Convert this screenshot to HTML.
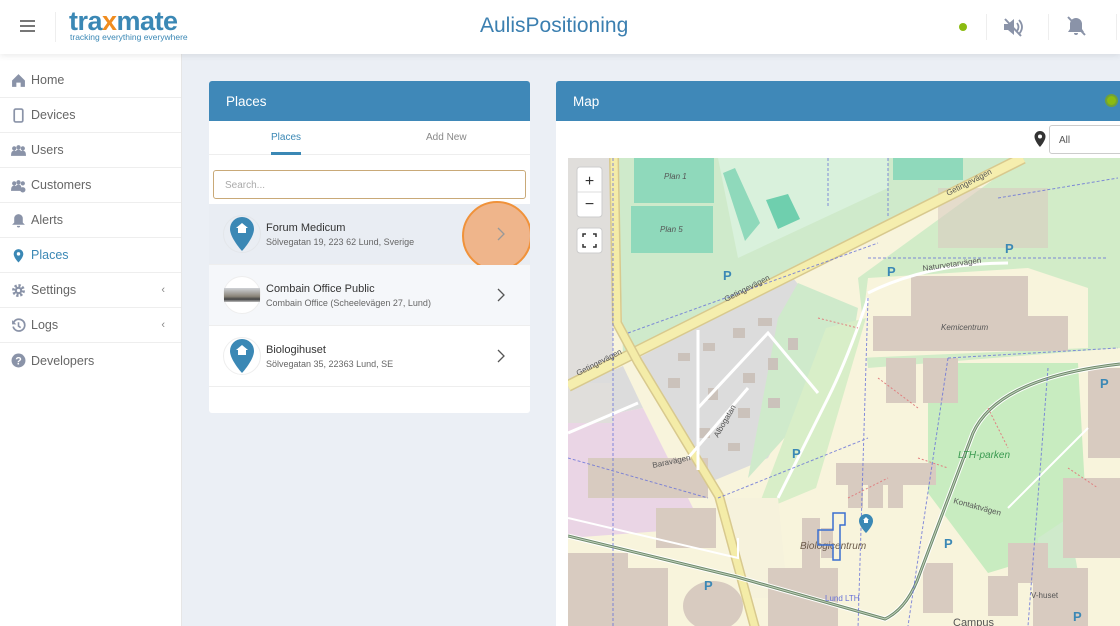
<!DOCTYPE html>
<html><head><meta charset="utf-8"><style>
*{box-sizing:border-box;margin:0;padding:0}
html,body{width:1120px;height:626px;overflow:hidden}
body{font-family:"Liberation Sans",sans-serif;background:#ebeff5;position:relative;color:#555}
.hdr{position:absolute;left:0;top:0;width:1120px;height:54px;background:#fff;box-shadow:0 2px 6px rgba(0,0,0,.08);z-index:3}
.side{position:absolute;left:0;top:54px;width:182px;height:572px;background:#fff;border-right:1px solid #e6e6e6}
.side .it{height:35px;border-bottom:1px solid #eee;display:flex;align-items:center;padding-left:11px;font-size:12.5px;color:#666;position:relative}
.side .it svg{width:15px;height:15px;margin-right:5px}
.side .arr{position:absolute;right:16px;font-size:11px;color:#888}
.card{position:absolute;background:#fff;border-radius:3px;overflow:hidden}
.ch{background:#3f88b8;color:#fff;font-size:13.5px;height:40px;display:flex;align-items:center;padding-left:17px}
.row{height:61px;display:flex;align-items:center;position:relative;border-bottom:1px solid #eee}
.row .t1{font-size:11px;color:#333}
.row .t2{font-size:9px;color:#666;margin-top:3px}
.row .chev{position:absolute;right:24px;top:22px;width:10px;height:16px}
.pin{width:38px;height:38px;border-radius:50%;border:1px solid #eee;margin:0 5px 0 14px;display:flex;align-items:center;justify-content:center;background:#fff}
</style></head><body>
<div class="hdr">
 <div style="position:absolute;left:20px;top:20px;width:15px;height:2px;background:#777;box-shadow:0 5px 0 #777,0 10px 0 #777"></div>
 <div style="position:absolute;left:55px;top:12px;width:1px;height:30px;background:#eee"></div>
 <div style="position:absolute;left:69px;top:6px;font-size:27px;font-weight:bold;color:#3b88b5;letter-spacing:-.5px">tra<span style="color:#f08c1e">x</span>mate</div>
 <div style="position:absolute;left:70px;top:32px;font-size:8.5px;color:#3b88b5">tracking everything everywhere</div>
 <div style="position:absolute;left:480px;top:14px;font-size:21px;color:#3b7fb0">AulisPositioning</div>
 <div style="position:absolute;left:959px;top:23px;width:8px;height:8px;border-radius:50%;background:#8bbb11"></div>
 <div style="position:absolute;left:986px;top:14px;width:1px;height:26px;background:#eee"></div>
 <div style="position:absolute;left:1048px;top:14px;width:1px;height:26px;background:#eee"></div>
 <div style="position:absolute;left:1116px;top:14px;width:1px;height:26px;background:#eee"></div>
 <svg style="position:absolute;left:1002px;top:16px" width="22" height="22" viewBox="0 0 22 22"><path d="M2 8h4l6-5v16l-6-5H2z" fill="#8a93a8"/><path d="M15 7q3 4 0 8M17 4q6 7 0 14" stroke="#8a93a8" stroke-width="1.8" fill="none"/><path d="M3 3l16 17" stroke="#8a93a8" stroke-width="2"/></svg>
 <svg style="position:absolute;left:1065px;top:15px" width="22" height="22" viewBox="0 0 22 22"><path d="M11 3a6 6 0 0 0-6 6v5l-2 3h16l-2-3V9a6 6 0 0 0-6-6zM9 18a2 2 0 0 0 4 0z" fill="#8a93a8"/><path d="M3 2l17 18" stroke="#8a93a8" stroke-width="2"/></svg>
</div>
<div class="side">
 <div style="height:9px"></div>
 <div class="it"><svg viewBox="0 0 14 14"><path d="M7 1L1 7v6h4V9h4v4h4V7z" fill="#8a93a8"/></svg>Home</div>
 <div class="it"><svg viewBox="0 0 14 14"><rect x="3" y="1" width="8" height="12" rx="1.5" fill="none" stroke="#8a93a8" stroke-width="1.6"/></svg>Devices</div>
 <div class="it"><svg viewBox="0 0 14 14"><circle cx="3" cy="5" r="2" fill="#8a93a8"/><circle cx="7" cy="4" r="2" fill="#8a93a8"/><circle cx="11" cy="5" r="2" fill="#8a93a8"/><path d="M0 12q0-5 3-5t3 5zM4 12q0-6 3-6t3 6zM8 12q0-5 3-5t3 5z" fill="#8a93a8"/></svg>Users</div>
 <div class="it"><svg viewBox="0 0 14 14"><circle cx="3" cy="5" r="2" fill="#8a93a8"/><circle cx="7" cy="4" r="2" fill="#8a93a8"/><circle cx="11" cy="5" r="2" fill="#8a93a8"/><path d="M0 12q0-5 3-5t3 5zM4 12q0-6 3-6t3 6z" fill="#8a93a8"/><circle cx="11" cy="11" r="2.5" fill="#8a93a8"/></svg>Customers</div>
 <div class="it"><svg viewBox="0 0 14 14"><path d="M7 1a4 4 0 0 0-4 4v4l-2 2h12l-2-2V5a4 4 0 0 0-4-4zM5.5 12a1.5 1.5 0 0 0 3 0z" fill="#8a93a8"/></svg>Alerts</div>
 <div class="it" style="color:#3b88b5"><svg viewBox="0 0 14 14"><path d="M7 1a4.5 4.5 0 0 0-4.5 4.5C2.5 9 7 13.5 7 13.5S11.5 9 11.5 5.5A4.5 4.5 0 0 0 7 1z" fill="#3b88b5"/><circle cx="7" cy="5.5" r="1.6" fill="#fff"/></svg>Places</div>
 <div class="it"><svg viewBox="0 0 14 14"><circle cx="7" cy="7" r="4.5" fill="none" stroke="#8a93a8" stroke-width="3" stroke-dasharray="2 1.5"/><circle cx="7" cy="7" r="3.5" fill="#8a93a8"/><circle cx="7" cy="7" r="1.5" fill="#fff"/></svg>Settings<span class="arr">‹</span></div>
 <div class="it"><svg viewBox="0 0 14 14"><path d="M2.5 4A5.5 5.5 0 1 1 2 8" fill="none" stroke="#8a93a8" stroke-width="1.6"/><path d="M1 2v4h4z" fill="#8a93a8"/><path d="M7 4v3.5l2 1.5" stroke="#8a93a8" stroke-width="1.5" fill="none"/></svg>Logs<span class="arr">‹</span></div>
 <div class="it" style="border:none"><svg viewBox="0 0 14 14"><circle cx="7" cy="7" r="6.5" fill="#8a93a8"/><text x="7" y="10.5" font-size="10" font-weight="bold" fill="#fff" text-anchor="middle" font-family="Liberation Sans">?</text></svg>Developers</div>
</div>

<div class="card" style="left:209px;top:81px;width:321px;height:332px">
 <div class="ch">Places</div>
 <div style="height:34px;border-bottom:1px solid #eee;position:relative;font-size:10px">
  <span style="position:absolute;left:62px;top:11px;color:#3b88b5">Places</span>
  <div style="position:absolute;left:62px;top:31px;width:30px;height:3px;background:#3b88b5"></div>
  <span style="position:absolute;left:217px;top:11px;color:#888">Add New</span>
 </div>
 <div style="margin:15px 4px 5px 4px;height:29px;border:1px solid #c9a978;border-radius:3px;font-size:10px;color:#aaa;padding:9px 11px">Search...</div>
 <div class="row" style="background:#e9edf3">
  <div class="pin" style="background:transparent;border-color:#e3e6ea"><svg width="26" height="36" viewBox="0 0 26 36"><path d="M13 1A12 12 0 0 0 1 13c0 9 12 22 12 22s12-13 12-22A12 12 0 0 0 13 1z" fill="#3b88b5"/><path d="M13 7l-6 5h2v5h8v-5h2z" fill="#fff"/></svg></div>
  <div><div class="t1">Forum Medicum</div><div class="t2">Sölvegatan 19, 223 62 Lund, Sverige</div></div>
  <div style="position:absolute;left:253px;top:-3px;width:70px;height:70px;border-radius:50%;background:rgba(240,170,120,.85);border:2px solid #f0923a"></div>
  <svg class="chev" viewBox="0 0 10 16"><path d="M2 2l6 6-6 6" stroke="#999" stroke-width="1.3" fill="none"/></svg>
 </div>
 <div class="row" style="background:#f5f7fa">
  <div class="pin"><div style="width:36px;height:14px;background:linear-gradient(#cfd2d6,#8a8478 60%,#444 80%,#bbb)"></div></div>
  <div><div class="t1">Combain Office Public</div><div class="t2">Combain Office (Scheelevägen 27, Lund)</div></div>
  <svg class="chev" viewBox="0 0 10 16"><path d="M2 2l6 6-6 6" stroke="#555" stroke-width="1.3" fill="none"/></svg>
 </div>
 <div class="row">
  <div class="pin"><svg width="26" height="36" viewBox="0 0 26 36"><path d="M13 1A12 12 0 0 0 1 13c0 9 12 22 12 22s12-13 12-22A12 12 0 0 0 13 1z" fill="#3b88b5"/><path d="M13 7l-6 5h2v5h8v-5h2z" fill="#fff"/></svg></div>
  <div><div class="t1">Biologihuset</div><div class="t2">Sölvegatan 35, 22363 Lund, SE</div></div>
  <svg class="chev" viewBox="0 0 10 16"><path d="M2 2l6 6-6 6" stroke="#555" stroke-width="1.3" fill="none"/></svg>
 </div>
</div>

<div class="card" style="left:556px;top:81px;width:564px;height:545px;border-radius:3px 0 0 0">
 <div class="ch">Map</div>
 <div style="position:absolute;left:549px;top:13px;width:13px;height:13px;border-radius:50%;background:#8bbb11;border:2px solid #6fa13a"></div>
 <svg style="position:absolute;left:478px;top:50px" width="12" height="16" viewBox="0 0 12 16"><path d="M6 0a5.5 5.5 0 0 0-5.5 5.5C.5 10 6 16 6 16s5.5-6 5.5-10.5A5.5 5.5 0 0 0 6 0z" fill="#333"/><circle cx="6" cy="5.5" r="2" fill="#fff"/></svg>
 <div style="position:absolute;left:493px;top:44px;width:80px;height:29px;border:1px solid #ccc;border-radius:3px;font-size:10px;color:#555;padding:9px 9px">All</div>
</div>

<svg style="position:absolute;left:568px;top:158px" width="552" height="468" viewBox="0 0 552 468">
 <rect width="552" height="468" fill="#f8f4dc"/>
 <!-- left strip gray -->
 <path d="M0 0h45v228L0 232z" fill="#e0dedb"/>
 <!-- green above Getinge -->
 <path d="M50 0H455L55 200z" fill="#cfeacb"/>
 <path d="M150 0h170v30L170 100z" fill="#d9f1dc"/>
 <rect x="66" y="0" width="80" height="45" fill="#8fd9bb"/><rect x="63" y="48" width="82" height="47" fill="#8fd9bb"/>
 <path d="M155 15l12-5 25 55-15 18z" fill="#8fd9bb"/><path d="M198 42l22-6 12 25-22 10z" fill="#6fcfae"/>
 <path d="M325 0h70v22h-70z" fill="#8fd9bb"/>
 <path d="M455 0h97v190L300 210 290 120z" fill="#d2ecc8"/>
 <path d="M300 120l160 -10 60 20v60l-230 10z" fill="#f8f4dc"/>
 <!-- gray residential -->
 <path d="M70 200L225 120 262 165 255 195 200 300 140 325z" fill="#dcdcdc"/>
 <path d="M0 232L55 208 75 250 0 265z" fill="#dcdcdc"/>
 <path d="M0 265l75-15 60 120-135 10z" fill="#ead5e5"/>
 <path d="M0 225h45v40H0z" fill="#e0dedb"/>
 <!-- green strips -->
 <path d="M230 125l60 25-10 60-100 110 30-160z" fill="#cfeacb"/>
 <path d="M258 170l40-10-50 170-60 25z" fill="#d8eec8"/>
 <path d="M360 205h150l10 180-100 30-60-80z" fill="#c8ecc0"/>
 <path d="M470 380l30-20 20 108h-50z" fill="#cfeacb"/>
 <path d="M150 340l60 0 10 100-40 0z" fill="#f6f2dc"/>
 <g fill="#d8cbc0">
  <rect x="305" y="158" width="195" height="35"/><rect x="343" y="118" width="117" height="40"/><rect x="393" y="128" width="65" height="32"/>
  <rect x="318" y="200" width="30" height="45"/><rect x="355" y="200" width="35" height="45"/>
  <rect x="268" y="305" width="100" height="22"/><rect x="280" y="325" width="15" height="25"/><rect x="300" y="325" width="15" height="25"/><rect x="320" y="320" width="15" height="30"/>
  <rect x="234" y="360" width="18" height="50"/><rect x="253" y="370" width="12" height="30"/>
  <rect x="440" y="385" width="40" height="40"/><rect x="520" y="210" width="32" height="90"/>
  <rect x="495" y="320" width="57" height="80"/><rect x="465" y="410" width="55" height="58"/>
  <rect x="200" y="410" width="70" height="58"/><rect x="20" y="300" width="120" height="40"/>
  <rect x="88" y="350" width="60" height="40"/><rect x="0" y="395" width="60" height="73"/><rect x="50" y="410" width="50" height="58"/>
  <ellipse cx="145" cy="448" rx="30" ry="25"/><rect x="420" y="418" width="30" height="40"/><rect x="355" y="405" width="30" height="50"/>
  <rect x="370" y="30" width="110" height="60" opacity=".6"/>
 </g>
 <g fill="#cbc2bb">
  <rect x="110" y="195" width="12" height="8"/><rect x="135" y="185" width="12" height="8"/><rect x="165" y="170" width="12" height="10"/><rect x="190" y="160" width="14" height="8"/><rect x="100" y="220" width="12" height="10"/><rect x="140" y="230" width="10" height="12"/><rect x="175" y="215" width="12" height="10"/><rect x="200" y="200" width="10" height="12"/><rect x="170" y="250" width="12" height="10"/><rect x="200" y="240" width="12" height="10"/><rect x="130" y="270" width="12" height="10"/><rect x="160" y="285" width="12" height="8"/><rect x="220" y="180" width="10" height="12"/>
 </g>
 <path d="M0 228L455 0" stroke="#d8c98e" stroke-width="12"/><path d="M0 228L455 0" stroke="#f5eeae" stroke-width="9"/>
 <path d="M46 0L49 165 70 204 151 338 187 470" stroke="#d8c98e" stroke-width="10" fill="none"/>
 <path d="M46 0L49 165 70 204 151 338 187 470" stroke="#f4eca8" stroke-width="7" fill="none"/>
 <path d="M0 378L169 419 317 461Q340 450 352 415L405 275Q430 220 552 206" stroke="#fff" stroke-width="5" fill="none"/>
 <path d="M0 378L169 419 317 461Q340 450 352 415L405 275Q430 220 552 206" stroke="#6e8a6a" stroke-width="3" fill="none"/>
 <path d="M0 378L169 419 317 461Q340 450 352 415L405 275Q430 220 552 206" stroke="#c0d0bd" stroke-width="1" fill="none"/>
 <path d="M300 140Q280 200 260 240T210 340M130 172l0 140M130 250l70-75 50 60M180 230l-60 70M0 275l70-30M300 135q60 -30 140-30" stroke="#fff" stroke-width="3" fill="none"/>
 <path d="M0 360l170 40 0-20M440 350l80-80" stroke="#fff" stroke-width="2" fill="none"/>
 <path d="M45 0v470M60 175l250-90M300 140l-10 330M150 340l150-60M380 200l-40 268M480 210l-20 258M0 300l140 40M300 100h240M260 0v50M320 0v60M430 40l120-20M380 200l170-10" stroke="#6670d8" stroke-width="1" stroke-dasharray="3 2" fill="none" opacity=".8"/>
 <path d="M250 160l40 10M310 220l40 30M280 340l40-20M350 300l30 10M420 250l20 40M500 310l30 20" stroke="#e08080" stroke-width="1" stroke-dasharray="2 2" fill="none"/>
 <g font-family="Liberation Sans" font-size="8" fill="#555">
  <text x="373" y="172" font-style="italic">Kemicentrum</text>
  <text x="232" y="391" font-size="10" font-style="italic" fill="#6b5a4a">Biologicentrum</text>
  <text x="390" y="300" font-size="10" fill="#3a9a50" font-style="italic">LTH-parken</text>
  <text x="96" y="21" font-style="italic">Plan 1</text><text x="92" y="74" font-style="italic">Plan 5</text>
  <text x="257" y="443" fill="#6670d8">Lund LTH</text><text x="463" y="440">V-huset</text>
  <text x="385" y="468" font-size="11">Campus</text>
  <text x="158" y="144" transform="rotate(-27 158 144)">Getingevägen</text>
  <text x="10" y="218" transform="rotate(-27 10 218)">Getingevägen</text>
  <text x="380" y="38" transform="rotate(-27 380 38)">Getingevägen</text>
  <text x="355" y="113" transform="rotate(-8 355 113)">Naturvetarvägen</text>
  <text x="150" y="280" transform="rotate(-60 150 280)">Albogatan</text>
  <text x="85" y="310" transform="rotate(-12 85 310)">Baravägen</text>
  <text x="385" y="345" transform="rotate(15 385 345)">Kontaktvägen</text>
 </g>
 <g font-family="Liberation Sans" font-size="13" fill="#3b88b5" font-weight="bold">
  <text x="155" y="122">P</text><text x="319" y="118">P</text><text x="437" y="95">P</text><text x="224" y="300">P</text><text x="376" y="390">P</text><text x="136" y="432">P</text><text x="532" y="230">P</text><text x="505" y="463">P</text>
 </g>
 <path d="M265 355h12v12h-5v35h-7v-15h-15v-15h15z" fill="none" stroke="#3b6fd0" stroke-width="1.5"/>
 <path d="M298 356a7 7 0 0 0-7 7c0 5 7 12 7 12s7-7 7-12a7 7 0 0 0-7-7z" fill="#3b88b5"/><path d="M298 359l-3 3h1v3h4v-3h1z" fill="#fff"/>
 <rect x="9" y="9" width="25" height="50" rx="3" fill="#fff" stroke="#ccc"/>
 <line x1="9" y1="34" x2="34" y2="34" stroke="#ddd"/>
 <text x="21.5" y="28" font-size="16" text-anchor="middle" fill="#333" font-family="Liberation Sans">+</text>
 <text x="21.5" y="51" font-size="16" text-anchor="middle" fill="#333" font-family="Liberation Sans">−</text>
 <rect x="9" y="70" width="25" height="25" rx="3" fill="#fff" stroke="#ccc"/>
 <path d="M15 79v-3h3M25 76h3v3M28 86v3h-3M18 89h-3v-3" stroke="#333" stroke-width="1.5" fill="none"/>
</svg>
</body></html>
